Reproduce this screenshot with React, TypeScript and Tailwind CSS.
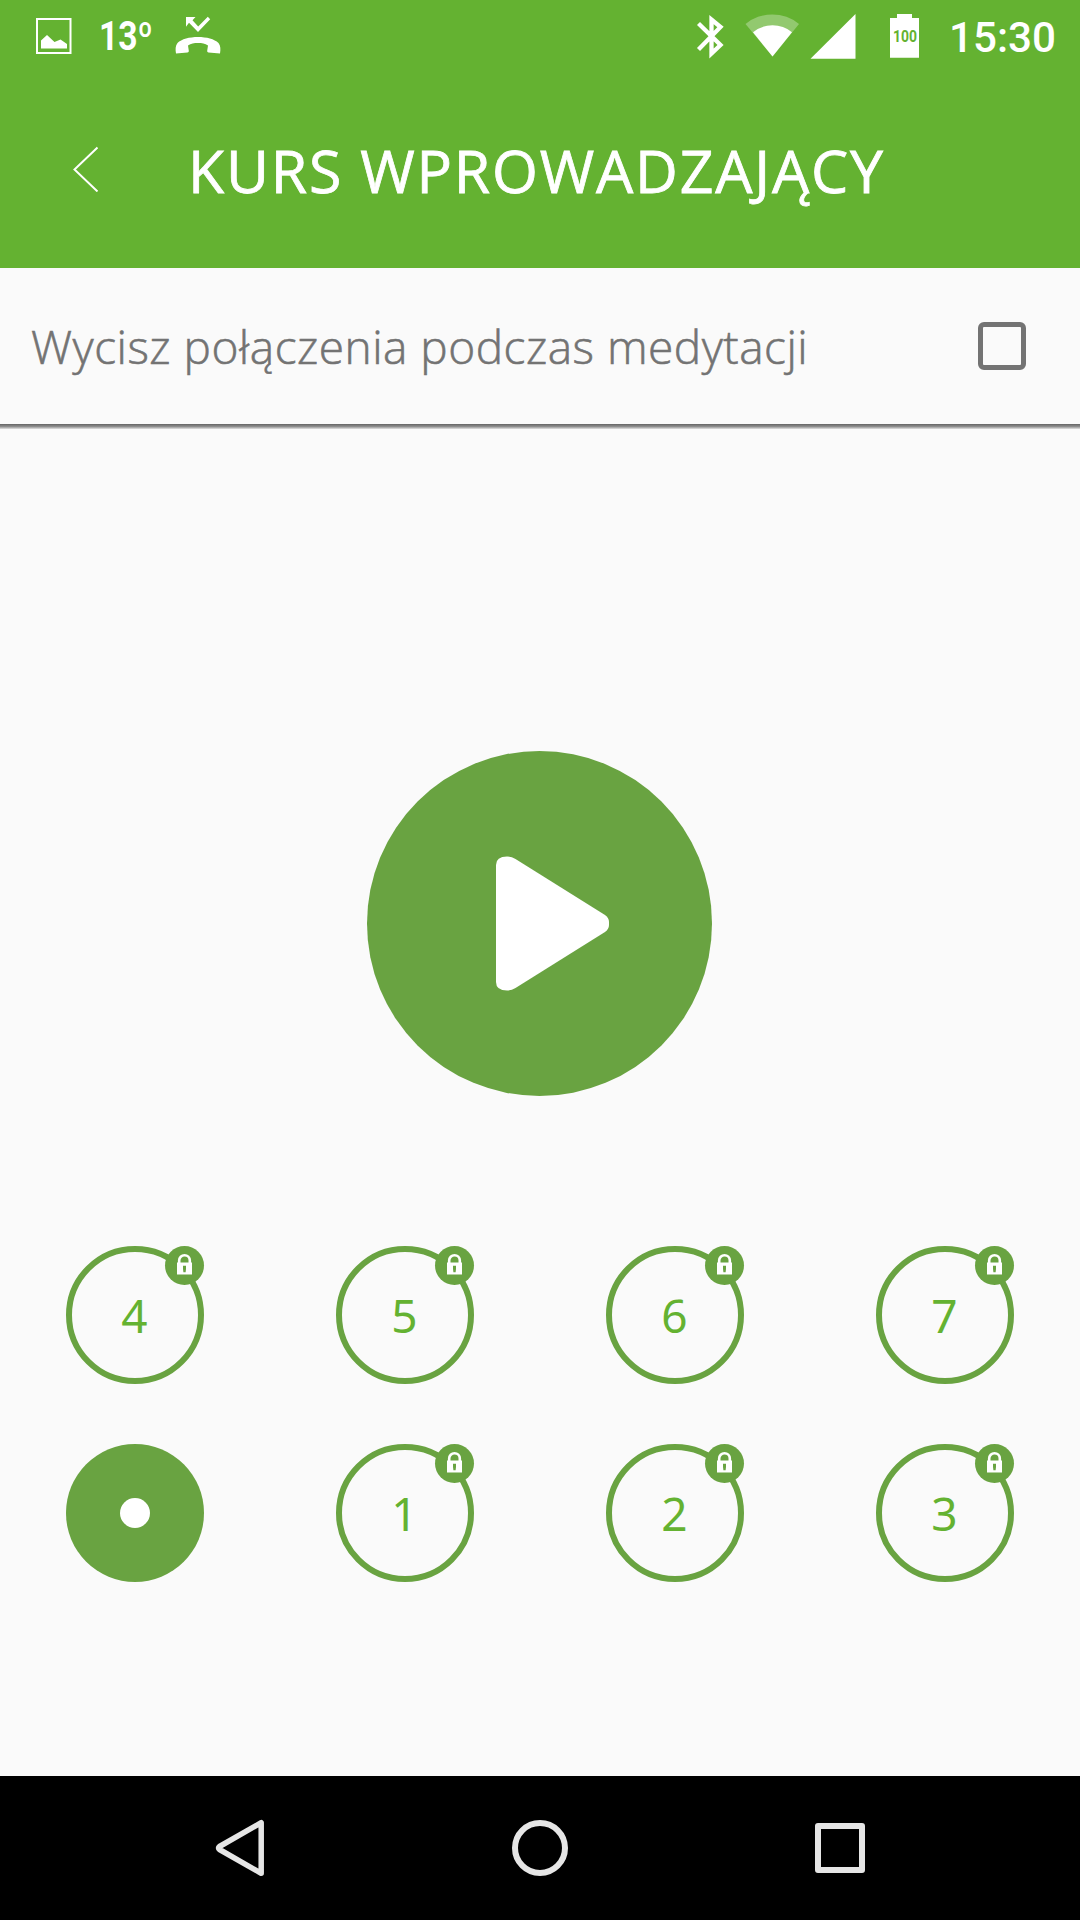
type Session = {
  label: string;
  locked: boolean;
};

const sessions: Session[] = [
  { label: "4", locked: true },
  { label: "5", locked: true },
  { label: "6", locked: true },
  { label: "7", locked: true },
  { label: "", locked: false },
  { label: "1", locked: true },
  { label: "2", locked: true },
  { label: "3", locked: true }
];

function StatusBar() {
  return (
    <div className="flex h-[72px] items-start justify-between text-white">
      <svg width="240" height="72" viewBox="0 0 240 72" fill="currentColor">
        <path d="M36 18h35.500v36H36zM38 20v32h31.500V20z" fillRule="evenodd" />
        <path d="M41 48.500v-8l6-5.500 7.500 7 6-2.500 6.500 4.500v4.500z" />
        <text
          x="99"
          y="50"
          fontSize="40"
          fontWeight="700"
          textLength="54"
          lengthAdjust="spacingAndGlyphs"
          className="font-['Roboto',sans-serif]"
        >
          13º
        </text>
        <path d="M186 17h9.500l-3 3.200 5.700 6.300 9.600-9.700 2.400 2.400L198 32l-9-9.300-3 4z" />
        <path d="M176 53.500c-.7-4-.7-8 1.500-10.500 4-4 12-6 20.500-6s16.500 2 20.500 6c2.200 2.500 2.200 6.500 1.500 10.500l-11.500-1c-.8-.2-1.400-.9-1.300-1.800l.8-5.200c-3-2-6-2.500-10-2.500s-7 .5-10 2.500l.8 5.200c.1.900-.5 1.600-1.300 1.800z" />
      </svg>

      <svg width="400" height="72" viewBox="680 0 400 72" fill="currentColor">
        <path
          d="M698.500 23.500L720.500 45l-9 8.500V19.500L720.500 27 698.500 49.500"
          fill="none"
          stroke="currentColor"
          strokeWidth="4.300"
        />
        <path d="M745.500 24a42 42 0 0 1 53.500 0l-26.500 32.500z" opacity=".3" />
        <path d="M753 32.200a31 31 0 0 1 39 0l-19.500 24.300z" />
        <path d="M855.500 14v44.700h-45z" />
        <path d="M897 14h15v4h7v39.700h-29V18h7z" />
        <text
          x="893"
          y="42"
          fontSize="16.500"
          fontWeight="700"
          textLength="24"
          lengthAdjust="spacingAndGlyphs"
          className="fill-[#64b231] font-['Roboto',sans-serif]"
        >
          100
        </text>
        <text
          x="949"
          y="52"
          fontSize="42.500"
          fontWeight="500"
          textLength="107"
          lengthAdjust="spacingAndGlyphs"
          className="font-['Roboto',sans-serif]"
        >
          15:30
        </text>
      </svg>
    </div>
  );
}

function Header() {
  return (
    <header className="h-[268px] bg-[#64b231] text-white">
      <StatusBar />

      <div className="flex h-[196px] items-start">
        <button type="button" aria-label="Wstecz" className="ml-[72px] mt-[74px]">
          <svg width="28" height="46" viewBox="0 0 28 46" fill="none" stroke="currentColor" strokeWidth="2">
            <path d="M25.500 1.500L2.500 23.500l23 22" />
          </svg>
        </button>

        <h1 className="ml-[88px] mt-[58px] whitespace-nowrap font-['Open_Sans',sans-serif] text-[59px] leading-[80px] tracking-[1.8px] [-webkit-text-stroke:0.8px_white]">
          KURS WPROWADZAJĄCY
        </h1>
      </div>
    </header>
  );
}

function MuteRow() {
  return (
    <label className="flex h-[156px] items-center justify-between pl-[31px] pr-[54px]">
      <span className="whitespace-nowrap font-['Open_Sans',sans-serif] text-[46px] font-light leading-[60px] tracking-[0.5px] text-[#737373] [-webkit-text-stroke:0.6px_#737373]">
        Wycisz połączenia podczas medytacji
      </span>
      <span className="size-12 rounded-[6px] border-[5px] border-[#737373]" />
    </label>
  );
}

function LockBadge() {
  return (
    <span className="absolute right-0 top-0 size-[39px] rounded-full bg-[#69a341]">
      <svg width="39" height="39" viewBox="0 0 39 39">
        <path d="M14.200 17v-2.500a5.300 5.300 0 0 1 10.600 0V17" fill="none" stroke="white" strokeWidth="2.600" />
        <path d="M12 16.500h15v12H12z" fill="white" />
        <path d="M18 19.700h3v3l-.4 3.500h-2.200l-.4-3.500z" fill="#69a341" />
      </svg>
    </span>
  );
}

function SessionButton({ session }: { session: Session }) {
  if (!session.locked) {
    return (
      <button type="button" className="flex size-[138px] items-center justify-center rounded-full bg-[#69a341]">
        <span className="size-[30px] rounded-full bg-white" />
      </button>
    );
  }

  return (
    <button
      type="button"
      className="relative flex size-[138px] items-center justify-center"
    >
      <span className="flex size-[138px] items-center justify-center rounded-full border-[6px] border-[#69a341] pr-px font-['Noto_Sans',sans-serif] text-[46px] leading-[60px] text-[#64b231]">
        {session.label}
      </span>
      <LockBadge />
    </button>
  );
}

function NavigationBar() {
  return (
    <nav className="flex h-36 items-center justify-between bg-black px-[210px]">
      <svg width="60" height="60" viewBox="0 0 60 60" fill="none" stroke="#e6e6e6" strokeWidth="5.500" strokeLinejoin="round">
        <path d="M51.200 4.700v50.600L9.500 31.500q-2-1.500 0-3z" />
      </svg>
      <svg width="60" height="60" viewBox="0 0 60 60" fill="none" stroke="#e6e6e6" strokeWidth="6">
        <circle cx="30" cy="30" r="25" />
      </svg>
      <svg width="60" height="60" viewBox="0 0 60 60" fill="none" stroke="#e6e6e6" strokeWidth="6" strokeLinejoin="round">
        <rect x="8" y="8" width="44" height="44" />
      </svg>
    </nav>
  );
}

export default function App() {
  return (
    <main className="flex h-[1920px] w-[1080px] flex-col overflow-hidden bg-[#fafafa]">
      <Header />
      <MuteRow />
      <div className="h-[5px] shrink-0 bg-linear-to-b from-[#656565] via-[#8d8d8d] to-[#e2e2e2]" />

      <section className="flex flex-1 flex-col items-center pt-[322px]">
        <button
          type="button"
          aria-label="Odtwórz"
          className="mr-px size-[345px] rounded-full bg-[#69a341]"
        >
          <svg width="345" height="345" viewBox="0 0 345 345" fill="white">
            <path d="M129 114q0-8.500 11-8.500 4.500 0 8.500 2.500l89.500 56q4 3 4 7v3q0 4-4 7l-89.500 56q-4 2.500-8.500 2.500-11 0-11-8.500z" />
          </svg>
        </button>

        <div className="mt-[150px] grid w-full grid-cols-4 justify-items-center gap-y-[60px]">
          {sessions.map((session) => (
            <SessionButton key={session.label} session={session} />
          ))}
        </div>
      </section>

      <NavigationBar />
    </main>
  );
}
